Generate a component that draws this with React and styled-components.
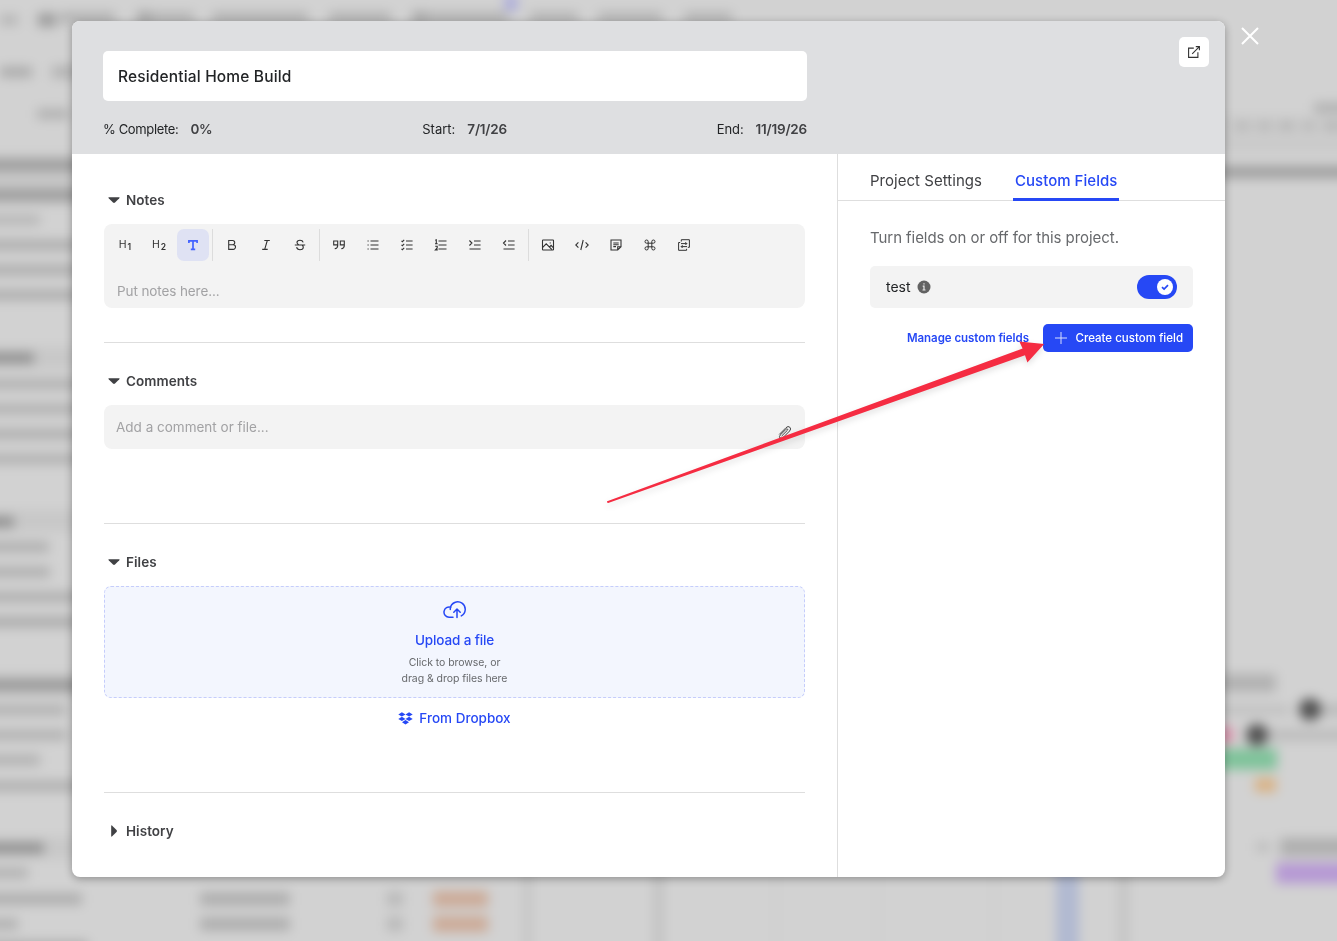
import React, { useState } from "react";
import styled, { createGlobalStyle, ThemeProvider } from "styled-components";

const theme = {
	blue: "#2648f5",
	ink: "#222426",
	body: "#404144",
	muted: "#67696c",
	placeholder: "#a2a2a4",
	panel: "#f3f3f3",
	line: "#dedede",
	header: "#dedfe1"
};

const GlobalStyle = createGlobalStyle`
	* {
		box-sizing: border-box;
	}

	body {
		margin: 0;
		overflow: hidden;
		background: #d2d2d2;
		font-family: Inter, "Liberation Sans", sans-serif;
	}

	button,
	input {
		font-family: inherit;
	}
`;

/* Blurred schedule behind the dialog: [x, y center, width, height, color] */
const smudges = [
	[0, 20, 18, 10, "#b4b4b4"],
	[38, 20, 18, 13, "#999"],
	[60, 18, 55, 11, "#b0b0b0"],
	[137, 18, 14, 13, "#a4a4a4"],
	[151, 18, 43, 11, "#b2b2b2"],
	[212, 18, 96, 11, "#b0b0b0"],
	[329, 18, 62, 11, "#b0b0b0"],
	[412, 18, 14, 13, "#a6a6a6"],
	[426, 18, 82, 11, "#b0b0b0"],
	[530, 18, 48, 11, "#b2b2b2"],
	[598, 18, 64, 11, "#b2b2b2"],
	[684, 18, 48, 11, "#b2b2b2"],
	[505, 3, 12, 16, "#a9a9dc"],
	[0, 72, 32, 10, "#a8a8a8"],
	[52, 72, 40, 12, "#b2b2b2"],
	[37, 114, 32, 10, "#afafaf"],
	[-20, 180, 110, 50, "#c8c8c8"],
	[-20, 165, 111, 11, "#999"],
	[-20, 195, 110, 11, "#999"],
	[-20, 220, 60, 9, "#b3b3b3"],
	[-20, 245, 110, 10, "#acacac"],
	[-20, 270, 110, 10, "#acacac"],
	[-20, 295, 110, 10, "#acacac"],
	[-20, 358, 110, 22, "#c8c8c8"],
	[-20, 358, 54, 10, "#8c8c8c"],
	[-20, 384, 110, 10, "#b0b0b0"],
	[-20, 409, 110, 10, "#b0b0b0"],
	[-20, 434, 110, 10, "#adadad"],
	[-20, 459, 110, 10, "#b0b0b0"],
	[-20, 521, 110, 22, "#c8c8c8"],
	[-20, 522, 34, 10, "#8c8c8c"],
	[-20, 547, 69, 10, "#adadad"],
	[-20, 572, 70, 10, "#adadad"],
	[-20, 597, 110, 10, "#adadad"],
	[-20, 622, 110, 10, "#a9a9a9"],
	[-20, 685, 111, 22, "#c6c6c6"],
	[-20, 685, 110, 11, "#969696"],
	[-20, 710, 86, 10, "#b0b0b0"],
	[-20, 735, 87, 10, "#b0b0b0"],
	[-20, 760, 60, 10, "#b0b0b0"],
	[-20, 786, 110, 10, "#aeaeae"],
	[-20, 848, 110, 22, "#c8c8c8"],
	[-20, 848, 64, 10, "#8c8c8c"],
	[-20, 873, 48, 10, "#b0b0b0"],
	[-20, 899, 102, 11, "#acacac"],
	[-20, 924, 38, 10, "#adadad"],
	[-20, 947, 108, 12, "#acacac"],
	[200, 899, 90, 13, "#adadad"],
	[200, 924, 90, 13, "#adadad"],
	[387, 899, 16, 14, "#b8b8b8"],
	[387, 924, 16, 14, "#b8b8b8"],
	[433, 899, 55, 16, "#ccaa97"],
	[433, 924, 55, 16, "#ccaa97"],
	[524, 900, 7, 140, "#c2c2c2"],
	[654, 900, 9, 140, "#c0c0c0"],
	[774, 900, 4, 140, "#cdcdcd"],
	[876, 900, 4, 140, "#cdcdcd"],
	[992, 900, 4, 140, "#cdcdcd"],
	[1056, 900, 23, 140, "#b1b9d1"],
	[1118, 900, 11, 140, "#c4c4c4"],
	[1314, 108, 40, 10, "#b0b0b0"],
	[1200, 126, 150, 20, "#cbcbcb"],
	[1236, 126, 13, 7, "#b2b2b2"],
	[1258, 126, 13, 7, "#b2b2b2"],
	[1280, 126, 13, 7, "#aeaeae"],
	[1303, 126, 11, 7, "#b2b2b2"],
	[1324, 126, 20, 7, "#b0b0b0"],
	[1200, 145, 150, 14, "#cacaca"],
	[1190, 172, 170, 12, "#9e9e9e"],
	[1200, 683, 76, 18, "#b2b2b2"],
	[1200, 710, 90, 10, "#c1c1c1"],
	[1318, 710, 30, 12, "#bbb"],
	[1268, 735, 90, 12, "#bdbdbd"],
	[1215, 735, 18, 16, "#db8faa"],
	[1200, 759, 77, 21, "#7fc39a"],
	[1255, 785, 21, 14, "#d9b182"],
	[1256, 847, 14, 10, "#bdbdbd"],
	[1280, 847, 80, 18, "#afafaf"],
	[1276, 873, 80, 21, "#b699d4"]
];

const Backdrop = styled.svg`
	position: fixed;
	inset: 0;
	z-index: -1;
	width: 1337px;
	height: 941px;
`;

const Screen = styled.main`
	height: 941px;
	padding: 21px 72px 64px;
	display: flex;
	align-items: flex-start;
`;

const Dialog = styled.section`
	flex: 0 0 1153px;
	height: 856px;
	display: flex;
	flex-direction: column;

	background: #fff;
	border-radius: 8px;
	box-shadow: 0 2px 9px rgba(0, 0, 0, 0.32);
	overflow: hidden;
`;

const CloseDialog = styled.button`
	flex: none;
	width: 20px;
	height: 20px;
	margin: 5px 0 0 15px;
	padding: 0;

	background: none;
	border: none;

	svg {
		display: block;
	}
`;

const Header = styled.header`
	flex: 0 0 133px;
	padding: 16px 16px 0 31px;
	display: flex;
	justify-content: space-between;
	align-items: flex-start;

	background: ${props => props.theme.header};
`;

const Summary = styled.div`
	width: 704px;
	padding-top: 14px;
`;

const ProjectName = styled.input`
	display: block;
	width: 100%;
	height: 50px;
	padding: 0 15px;

	color: ${props => props.theme.ink};
	background: #fff;

	border: none;
	border-radius: 5px;
	outline: none;

	font-size: 15.5px;
	font-weight: 450;
	letter-spacing: 0.16px;
`;

const Facts = styled.div`
	height: 53px;
	padding-top: 3px;
	display: flex;
	justify-content: space-between;
	align-items: center;
`;

const Fact = styled.div`
	display: flex;
	align-items: center;
	gap: 12px;

	color: ${props => props.theme.ink};

	font-size: 13px;
	letter-spacing: ${props => props.$track || 0}px;

	strong {
		color: ${props => props.theme.body};
		font-size: 13.5px;
		font-weight: 600;
		letter-spacing: -0.2px;
	}
`;

const OpenButton = styled.button`
	width: 30px;
	height: 30px;
	padding: 0;
	display: grid;
	place-items: center;

	color: #333;
	background: #fff;

	border: none;
	border-radius: 5px;
`;

const Columns = styled.div`
	flex: 1;
	display: flex;
`;

const Details = styled.div`
	width: 765px;
	padding: 8px 32px 0;
`;

const SectionBox = styled.section`
	padding: 24px 0 ${props => props.$bottom || 0}px;
	border-bottom: ${props => (props.$bottom ? 1 : 0)}px solid
		${props => props.theme.line};
`;

const SectionTitle = styled.h2`
	height: 28px;
	margin: 0 0 10px;
	padding-left: 4px;
	display: flex;
	align-items: center;
	gap: 6px;

	color: ${props => props.theme.body};

	font-size: 13.5px;
	font-weight: 600;
	letter-spacing: 0.05px;
`;

const Editor = styled.div`
	height: 84px;
	padding: 5px;

	background: ${props => props.theme.panel};
	border-radius: 8px;
`;

const Toolbar = styled.div`
	display: flex;
	gap: 2px;
`;

const ToolButton = styled.button`
	width: 32px;
	height: 32px;
	padding: 0;
	display: grid;
	place-items: center;

	color: ${props => (props.$active ? "#4262ff" : "#333")};
	background: ${props => (props.$active ? "#dfe2f3" : "none")};

	border: none;
	border-radius: 7px;
`;

const HeadingIcon = styled.span`
	color: #333;

	font-size: 10.5px;
	font-weight: 400;
	line-height: 14px;

	sub {
		margin-left: 1px;
		font-size: 8.5px;
		font-weight: 600;
		line-height: 0;
		vertical-align: -2px;
	}
`;

const Separator = styled.span`
	width: 1px;
	margin: 0 1px;
	background: #dcdcdc;
`;

const Placeholder = styled.p`
	margin: 0;
	color: ${props => props.theme.placeholder};
	font-size: 13.5px;
	line-height: 20px;
`;

const EditorPlaceholder = styled(Placeholder)`
	padding: 20px 8px 0;
	letter-spacing: -0.1px;
`;

const CommentBox = styled.div`
	height: 44px;
	padding: 0 12px;
	display: flex;
	justify-content: space-between;
	align-items: center;

	background: ${props => props.theme.panel};
	border-radius: 8px;

	svg {
		margin-top: 12px;
	}
`;

const DropZone = styled.div`
	height: 112px;
	padding-top: 13px;
	display: flex;
	flex-direction: column;
	align-items: center;

	color: ${props => props.theme.muted};
	background: #f3f6fe;

	border: 1px dashed #c5cdfb;
	border-radius: 7px;

	font-size: 10.5px;
	line-height: 16px;
	letter-spacing: -0.06px;
	text-align: center;
`;

const UploadLabel = styled.span`
	margin: 11px 0 5px;
	color: ${props => props.theme.blue};
	font-size: 13.5px;
	font-weight: 450;
	line-height: 20px;
	letter-spacing: -0.12px;
`;

const DropboxLink = styled.div`
	height: 20px;
	margin-top: 10px;
	display: flex;
	justify-content: center;
	align-items: center;
	gap: 6px;

	color: ${props => props.theme.blue};

	font-size: 13.5px;
	font-weight: 450;
	letter-spacing: 0;
`;

const Sidebar = styled.aside`
	flex: 1;
	border-left: 1px solid ${props => props.theme.line};
`;

const Tabs = styled.nav`
	height: 47px;
	padding-left: 30px;
	display: flex;
	gap: 29px;

	border-bottom: 1px solid ${props => props.theme.line};
`;

const Tab = styled.button`
	height: 47px;
	padding: 8px 2px 0;

	color: ${props => (props.$active ? props.theme.blue : props.theme.body)};
	background: none;

	border: none;
	border-bottom: 3px solid
		${props => (props.$active ? props.theme.blue : "transparent")};

	font-size: 15px;
	font-weight: ${props => (props.$active ? 450 : 400)};
	letter-spacing: 0.03px;
	white-space: nowrap;
`;

const FieldPanel = styled.div`
	padding: 25px 32px;
`;

const Hint = styled.p`
	margin: 0 0 16px;
	color: ${props => props.theme.muted};
	font-size: 15px;
	line-height: 24px;
	letter-spacing: -0.06px;
	white-space: nowrap;
`;

const FieldRow = styled.div`
	height: 42px;
	padding: 0 16px;
	display: flex;
	align-items: center;
	gap: 6px;

	color: ${props => props.theme.ink};
	background: ${props => props.theme.panel};
	border-radius: 5px;

	font-size: 14px;
	line-height: 16px;
`;

const Switch = styled.button`
	width: 40px;
	height: 24px;
	margin-left: auto;
	padding: 4px;
	display: flex;
	justify-content: ${props => (props.$on ? "flex-end" : "flex-start")};

	background: ${props => (props.$on ? props.theme.blue : "#aaa")};
	border: none;
	border-radius: 12px;
`;

const Knob = styled.span`
	width: 16px;
	height: 16px;
	display: grid;
	place-items: center;

	color: ${props => props.theme.blue};
	background: #fff;
	border-radius: 50%;
`;

const Actions = styled.div`
	margin-top: 16px;
	display: flex;
	justify-content: flex-end;
	align-items: center;
	gap: 14px;
`;

const ManageLink = styled.span`
	color: ${props => props.theme.blue};
	font-size: 11.5px;
	font-weight: 600;
	letter-spacing: -0.04px;
`;

const CreateButton = styled.button`
	width: 150px;
	height: 28px;
	padding: 0 10px 0 12px;
	display: flex;
	justify-content: space-between;
	align-items: center;

	color: #fff;
	background: ${props => props.theme.blue};

	border: none;
	border-radius: 5px;

	font-size: 11.5px;
	font-weight: 500;
	white-space: nowrap;
`;

/* Callout arrow drawn over both columns */
const Arrow = styled.svg`
	position: absolute;
	top: 330px;
	left: 590px;
	pointer-events: none;
	filter: drop-shadow(0 3px 3px rgba(0, 0, 0, 0.12));
`;

const LineIcon = ({ size = 14, weight = 1.1, children }) => (
	<svg
		width={size}
		height={size}
		viewBox="0 0 14 14"
		fill="none"
		stroke="currentColor"
		strokeWidth={weight}
	>
		{children}
	</svg>
);

const listLines = <path d="M4.5 3H12.5M4.5 7H12.5M4.5 11H12.5" />;

const tools = [
	{ name: "h1", icon: <HeadingIcon>H<sub>1</sub></HeadingIcon> },
	{ name: "h2", icon: <HeadingIcon>H<sub>2</sub></HeadingIcon> },
	{
		name: "text",
		icon: (
			<LineIcon weight={1.7}>
				<path d="M2.9 5V2.9H11.1V5M7 2.9V11.3M4.8 11.3H9.2" />
			</LineIcon>
		)
	},
	null,
	{
		name: "bold",
		icon: (
			<LineIcon>
				<path d="M3.7 2.5H7.6A2.15 2.15 0 0 1 7.6 6.8H3.7ZM3.7 6.8H8.2A2.3 2.3 0 0 1 8.2 11.4H3.7Z" />
			</LineIcon>
		)
	},
	{
		name: "italic",
		icon: (
			<LineIcon>
				<path d="M5.3 2.5H10.8M3.2 11.4H8.7M8.3 2.5L5.7 11.4" />
			</LineIcon>
		)
	},
	{
		name: "strike",
		icon: (
			<LineIcon>
				<path d="M1.8 7H12.2M10.2 4.4Q9.6 2.3 7 2.3Q4 2.3 4 4.6Q4 6 5.8 6.7M3.6 9.2Q4 11.7 7 11.7Q10.3 11.7 10.3 9.2Q10.3 7.9 9.2 7.2" />
			</LineIcon>
		)
	},
	null,
	{
		name: "quote",
		icon: (
			<LineIcon>
				<path d="M5.7 3H1.7V6.9H5.7ZM5.7 3V7.4Q5.7 10.2 2.7 10.8M12.3 3H8.3V6.9H12.3ZM12.3 3V7.4Q12.3 10.2 9.3 10.8" />
			</LineIcon>
		)
	},
	{
		name: "bullets",
		icon: (
			<LineIcon>
				{listLines}
				<path d="M1.5 3H2.7M1.5 7H2.7M1.5 11H2.7" />
			</LineIcon>
		)
	},
	{
		name: "checks",
		icon: (
			<LineIcon>
				<path d="M6 3H12.6M6 7H12.6M6 11H12.6M1.5 2.8L2.4 3.7L4.2 1.9M1.5 6.8L2.4 7.7L4.2 5.9M1.5 10.8L2.4 11.7L4.2 9.9" />
			</LineIcon>
		)
	},
	{
		name: "numbers",
		icon: (
			<LineIcon>
				{listLines}
				<path d="M1.2 2.2L2.3 1.8V5.7M1 5.7H3.7M1.2 8.3H3.2V10L1.4 11.9H3.8" />
			</LineIcon>
		)
	},
	{
		name: "indent",
		icon: (
			<LineIcon>
				<path d="M6 3H12.6M6 7H12.6M1.5 11H12.6M1.4 2.5L3.9 5L1.4 7.5" />
			</LineIcon>
		)
	},
	{
		name: "outdent",
		icon: (
			<LineIcon>
				<path d="M6 3H12.6M6 7H12.6M1.5 11H12.6M4 2.5L1.5 5L4 7.5" />
			</LineIcon>
		)
	},
	null,
	{
		name: "image",
		icon: (
			<LineIcon>
				<rect x="1.5" y="2" width="11" height="10" rx="0.6" />
				<path d="M1.7 9.3L5.2 5.8L11 11.7M8.5 9L10.1 7.4L12.3 9.6" />
				<circle cx="9.2" cy="4.9" r="0.6" fill="currentColor" stroke="none" />
			</LineIcon>
		)
	},
	{
		name: "code",
		icon: (
			<LineIcon>
				<path d="M3.4 4.3L0.8 7L3.4 9.7M10.6 4.3L13.2 7L10.6 9.7M8.2 2L5.8 12" />
			</LineIcon>
		)
	},
	{
		name: "note",
		icon: (
			<LineIcon>
				<path d="M8.7 12H2V2H12V8.7ZM8.7 12V8.7H12M4.3 5H9.7M4.3 6.8H9.7M4.3 8.6H7" />
			</LineIcon>
		)
	},
	{
		name: "command",
		icon: (
			<LineIcon weight={1}>
				<path d="M5.2 5.2V3.7A1.6 1.6 0 1 0 3.6 5.2H10.4A1.6 1.6 0 1 0 8.8 3.7V10.3A1.6 1.6 0 1 0 10.4 8.8H3.6A1.6 1.6 0 1 0 5.2 10.3Z" />
			</LineIcon>
		)
	},
	{
		name: "replace",
		icon: (
			<LineIcon weight={1}>
				<path d="M4.3 3.5V1.7H12.4V9.3H10.8M9.6 10.8V12.3H1.6V4.5H3.2M4 5.6H9.8M8.4 4.2L9.8 5.6L8.4 7M10 8.6H4.2M5.6 7.2L4.2 8.6L5.6 10" />
			</LineIcon>
		)
	}
];

function Section({ title, open = true, bottom, children }) {
	return (
		<SectionBox $bottom={bottom}>
			<SectionTitle>
				<svg width="12" height="12" viewBox="0 0 12 12" fill="currentColor">
					{open ? (
						<path d="M1 3.2H11Q12.2 3.2 11.3 4.2L7 8.5Q6 9.4 5 8.5L0.7 4.2Q-0.2 3.2 1 3.2Z" />
					) : (
						<path d="M3.2 1V11Q3.2 12.2 4.2 11.3L8.5 7Q9.4 6 8.5 5L4.2 0.7Q3.2 -0.2 3.2 1Z" />
					)}
				</svg>
				{title}
			</SectionTitle>
			{children}
		</SectionBox>
	);
}

export default function App() {
	const [name, setName] = useState("Residential Home Build");
	const [tool, setTool] = useState("text");
	const [tab, setTab] = useState("Custom Fields");
	const [enabled, setEnabled] = useState(true);

	return (
		<ThemeProvider theme={theme}>
			<GlobalStyle />
			<Backdrop viewBox="0 0 1337 941">
				<filter
					id="soften"
					x="-5%"
					y="-5%"
					width="110%"
					height="110%"
					colorInterpolationFilters="sRGB"
				>
					<feGaussianBlur stdDeviation="6" />
				</filter>
				<g filter="url(#soften)">
					<rect x="-60" y="-60" width="1460" height="1060" fill="#d2d2d2" />
					{smudges.map(([x, y, width, height, fill]) => (
						<rect
							key={`${x}-${y}-${width}`}
							x={x}
							y={y - height / 2}
							width={width}
							height={height}
							fill={fill}
						/>
					))}
					<circle cx="1310" cy="709.5" r="11" fill="#505050" />
					<circle cx="1257" cy="735" r="11" fill="#505050" />
				</g>
			</Backdrop>
			<Screen>
				<Dialog>
					<Header>
						<Summary>
							<ProjectName
								value={name}
								onChange={e => setName(e.target.value)}
							/>
							<Facts>
								<Fact $track={-0.35}>
									% Complete: <strong>0%</strong>
								</Fact>
								<Fact>
									Start: <strong>7/1/26</strong>
								</Fact>
								<Fact $track={-0.1}>
									End: <strong>11/19/26</strong>
								</Fact>
							</Facts>
						</Summary>
						<OpenButton>
							<LineIcon>
								<path d="M6.8 3.1H1.6V12.4H10.9V7.2M5.2 8.8L12.4 1.6M8.8 1.6H12.4V5.2" />
							</LineIcon>
						</OpenButton>
					</Header>
					<Columns>
						<Details>
							<Section title="Notes" bottom={34}>
								<Editor>
									<Toolbar>
										{tools.map((item, i) =>
											item ? (
												<ToolButton
													key={item.name}
													$active={tool === item.name}
													onClick={() => setTool(item.name)}
												>
													{item.icon}
												</ToolButton>
											) : (
												<Separator key={i} />
											)
										)}
									</Toolbar>
									<EditorPlaceholder>Put notes here...</EditorPlaceholder>
								</Editor>
							</Section>
							<Section title="Comments" bottom={74}>
								<CommentBox>
									<Placeholder>Add a comment or file...</Placeholder>
									<svg
										width="16"
										height="16"
										viewBox="0 0 16 16"
										fill="none"
										stroke="#444"
										strokeLinecap="round"
									>
										<path d="M4.9 10.8L10.3 5.4Q11.1 4.6 10.5 4Q9.9 3.4 9.1 4.2L3.4 9.9Q1.7 11.7 3 13Q4.3 14.3 6.1 12.5L12.6 6Q14.6 3.9 12.8 2.2Q11.1 0.6 9 2.7L2.5 9.2" />
									</svg>
								</CommentBox>
							</Section>
							<Section title="Files" bottom={64}>
								<DropZone>
									<svg
										width="24"
										height="19"
										viewBox="0 0 24 19"
										fill="none"
										stroke={theme.blue}
										strokeWidth="1.5"
										strokeLinecap="round"
										strokeLinejoin="round"
									>
										<path d="M10 17.2H6.2A5.1 5.1 0 1 1 7.8 7.3M7.3 9.5V8.3A7.5 7.5 0 1 1 18.3 15.9M14 17.6V9.2M10.8 12.2L14 9L17.2 12.2" />
									</svg>
									<UploadLabel>Upload a file</UploadLabel>
									<span>Click to browse, or</span>
									<span>drag &amp; drop files here</span>
								</DropZone>
								<DropboxLink>
									<svg width="15" height="13" viewBox="0 0 15 13" fill="currentColor">
										<path d="M3.9 0.2L7.5 2.4L3.9 4.6L0.3 2.4ZM11.1 0.2L14.7 2.4L11.1 4.6L7.5 2.4ZM3.9 4.7L7.5 6.9L3.9 9.1L0.3 6.9ZM11.1 4.7L14.7 6.9L11.1 9.1L7.5 6.9ZM7.5 8.1L11 10.2L7.5 12.4L4 10.2Z" />
									</svg>
									From Dropbox
								</DropboxLink>
							</Section>
							<Section title="History" open={false} />
						</Details>
						<Sidebar>
							<Tabs>
								{["Project Settings", "Custom Fields"].map(label => (
									<Tab
										key={label}
										$active={tab === label}
										onClick={() => setTab(label)}
									>
										{label}
									</Tab>
								))}
							</Tabs>
							<FieldPanel>
								<Hint>Turn fields on or off for this project.</Hint>
								<FieldRow>
									test
									<svg width="14" height="14" viewBox="0 0 14 14">
										<circle cx="7" cy="7" r="6.5" fill="#626262" />
										<path
											d="M7 3.2V4.5M5.7 6.2H7V10M5.5 10H8.5"
											stroke="#e8e8e8"
											strokeWidth="1.2"
											fill="none"
										/>
									</svg>
									<Switch $on={enabled} onClick={() => setEnabled(!enabled)}>
										<Knob>
											<svg width="8" height="8" viewBox="0 0 8 8" fill="none">
												<path
													d="M1 4.1L3.1 6.1L7 2.2"
													stroke="currentColor"
													strokeWidth="1.7"
												/>
											</svg>
										</Knob>
									</Switch>
								</FieldRow>
								<Actions>
									<ManageLink>Manage custom fields</ManageLink>
									<CreateButton>
										<svg width="12" height="12" viewBox="0 0 12 12" stroke="#d8defd">
											<path d="M6 0V12M0 6H12" />
										</svg>
										Create custom field
									</CreateButton>
								</Actions>
							</FieldPanel>
						</Sidebar>
					</Columns>
				</Dialog>
				<CloseDialog>
					<svg width="20" height="20" stroke="#fff" strokeWidth="2">
						<path d="M2 2L18 18M18 2L2 18" />
					</svg>
				</CloseDialog>
			</Screen>
			<Arrow width="470" height="190" viewBox="590 330 470 190">
				<path
					d="M607.2 501.2L1022.6 348.6L1019.3 341.6L1044.2 344L1027.4 362.4L1025 355.2L608.2 503Q606.2 502.7 607.2 501.2Z"
					fill="#f52c42"
				/>
			</Arrow>
		</ThemeProvider>
	);
}
